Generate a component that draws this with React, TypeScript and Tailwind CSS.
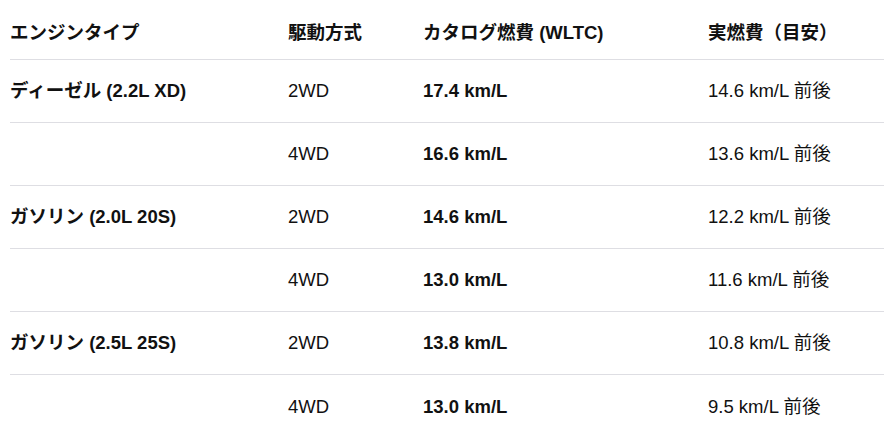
const rows = [
  { engine: "ディーゼル (2.2L XD)", drive: "2WD", catalog: "17.4 km/L", real: "14.6 km/L 前後" },
  { engine: "", drive: "4WD", catalog: "16.6 km/L", real: "13.6 km/L 前後" },
  { engine: "ガソリン (2.0L 20S)", drive: "2WD", catalog: "14.6 km/L", real: "12.2 km/L 前後" },
  { engine: "", drive: "4WD", catalog: "13.0 km/L", real: "11.6 km/L 前後" },
  { engine: "ガソリン (2.5L 25S)", drive: "2WD", catalog: "13.8 km/L", real: "10.8 km/L 前後" },
  { engine: "", drive: "4WD", catalog: "13.0 km/L", real: "9.5 km/L 前後" },
];

const grid = "grid grid-cols-[278px_135px_285px_1fr] items-center";

export default function App() {
  return (
    <div
      className="min-h-screen bg-white pl-[10px] text-[18.5px] leading-6 text-[#111111]"
      style={{ fontFamily: '"Liberation Sans", Arial, "Noto Sans CJK JP", sans-serif' }}
    >
      <div className={`${grid} h-[60px] pt-[7px] border-b border-[#dedee3] font-bold`}>
        <div>エンジンタイプ</div>
        <div>駆動方式</div>
        <div>カタログ燃費 (WLTC)</div>
        <div>実燃費（目安）</div>
      </div>
      {rows.map((r, i) => (
        <div
          key={i}
          className={`${grid} h-[63px] ${i < rows.length - 1 ? "border-b border-[#dedee3]" : ""}`}
        >
          <div className="font-bold">{r.engine}</div>
          <div>{r.drive}</div>
          <div className="font-bold">{r.catalog}</div>
          <div>{r.real}</div>
        </div>
      ))}
    </div>
  );
}
